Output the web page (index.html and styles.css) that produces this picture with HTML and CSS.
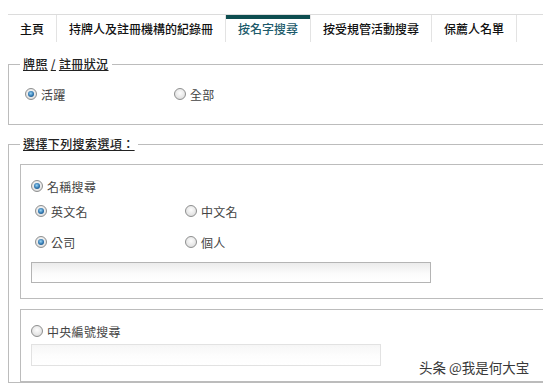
FILE: index.html
```html
<!DOCTYPE html>
<html lang="zh-Hant">
<head>
<meta charset="utf-8">
<title>按名字搜尋</title>
<link rel="stylesheet" href="styles.css">
</head>
<body>
<div class="page">
  <nav class="tabs">
    <div class="tab">主頁</div>
    <div class="tab">持牌人及註冊機構的紀錄冊</div>
    <div class="tab active">按名字搜尋</div>
    <div class="tab">按受規管活動搜尋</div>
    <div class="tab">保薦人名單</div>
  </nav>

  <fieldset class="group status">
    <legend>牌照<span class="sep">/</span>註冊狀況</legend>
    <div class="options">
      <label class="opt"><span class="radio on"></span>活躍</label>
      <label class="opt"><span class="radio"></span>全部</label>
    </div>
  </fieldset>

  <fieldset class="group search">
    <legend>選擇下列搜索選項：</legend>
    <div class="box">
      <label class="opt"><span class="radio on"></span>名稱搜尋</label>
      <div class="options sub">
        <label class="opt"><span class="radio on"></span>英文名</label>
        <label class="opt"><span class="radio"></span>中文名</label>
      </div>
      <div class="options sub sub-gap">
        <label class="opt"><span class="radio on"></span>公司</label>
        <label class="opt"><span class="radio"></span>個人</label>
      </div>
      <input class="field" type="text">
    </div>
    <div class="box box-ce">
      <label class="opt"><span class="radio"></span>中央編號搜尋</label>
      <input class="field field-ce" type="text" disabled>
    </div>
  </fieldset>
</div>
<div class="watermark">头条 @我是何大宝</div>
</body>
</html>
```
FILE: styles.css
```css
html, body {
  margin: 0;
  padding: 0;
  overflow: hidden;
  background: #fff;
}

body {
  font-family: "Noto Sans CJK TC", "Noto Sans", sans-serif;
  font-size: 12px;
  color: #333;
}

.page {
  width: 543px;
}

.tabs {
  display: flex;
  margin: 14px 0 0 8px;
  border-top: 1px solid #dcdcdc;
  height: 27px;
}

.tab {
  padding: 0 12px;
  line-height: 27px;
  border-right: 1px solid #e3e3e3;
  color: #111;
  font-weight: 500;
  white-space: nowrap;
}

.tab.active {
  color: #1d5b6b;
  box-shadow: inset 0 4px 0 #0d4e50;
}

.group {
  margin: 15px 0 0 8px;
  padding: 0;
  border: 1px solid #bcbcbc;
  border-right: none;
  min-inline-size: 0;
}

.group legend {
  margin-left: 11px;
  padding: 0 3px;
  line-height: 14px;
  font-weight: 500;
  color: #222;
  letter-spacing: 0.4px;
  text-decoration: underline;
}

.sep {
  padding: 0 3px;
}

.options {
  display: grid;
  grid-template-columns: 150px 150px;
}

.status .options {
  grid-template-columns: 149px 150px;
  margin: 13px 0 20px 16px;
}

.opt {
  display: flex;
  align-items: center;
  height: 20px;
  color: #444;
  letter-spacing: 0.3px;
}

.radio {
  width: 12px;
  height: 12px;
  box-sizing: border-box;
  border-radius: 50%;
  border: 1px solid #8e8f8f;
  background: radial-gradient(circle at 50% 40%, #fdfdfd 0, #e6e6e6 60%, #cfcfcf 100%);
  margin-right: 4px;
  position: relative;
  flex: none;
}

.radio.on::after {
  content: "";
  position: absolute;
  inset: 2px;
  border-radius: 50%;
  background: radial-gradient(circle at 45% 40%, #9ad6f7 0, #2e74ad 55%, #163f68 100%);
}

.search {
  margin-top: 12px;
}

.box {
  margin: 13px 0 0 11px;
  border: 1px solid #bcbcbc;
  border-right: none;
  padding: 11px 0 15px 10px;
}

.sub {
  padding-left: 4px;
  margin-top: 5px;
}

.sub-gap {
  margin-top: 11px;
}

.field {
  display: block;
  box-sizing: border-box;
  width: 400px;
  height: 21px;
  margin: 10px 0 0 0;
  border: 1px solid #b4b4b4;
  background: linear-gradient(#ebebeb, #fbfbfb 55%, #fff);
  padding: 0;
}

.box-ce {
  margin-top: 10px;
}

.field-ce {
  width: 350px;
  height: 22px;
  margin-top: 3px;
  border: 1px solid #e2e2e2;
  background: linear-gradient(#f6f6f6, #fdfdfd 55%, #fff);
}

.watermark {
  position: absolute;
  left: 419px;
  top: 359px;
  font-family: "Noto Sans CJK SC", sans-serif;
  font-size: 13.5px;
  line-height: 16px;
  color: #3a3a3a;
  text-shadow: 0 0 2px #fff;
  white-space: nowrap;
}
```
